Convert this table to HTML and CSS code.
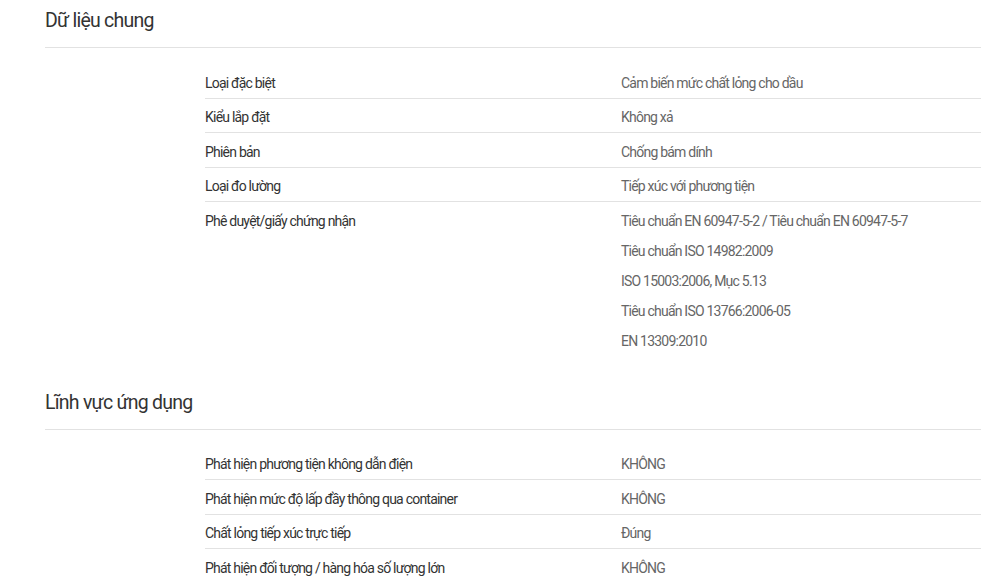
FILE: index.html
```html
<!DOCTYPE html>
<html lang="vi">
<head>
<meta charset="utf-8">
<title>Dữ liệu chung</title>
<link rel="stylesheet" href="styles.css">
</head>
<body>
<main class="page">
  <section class="section">
    <h2 class="section-title">Dữ liệu chung</h2>
    <div class="spec-table">
      <div class="spec-row">
        <div class="spec-label">Loại đặc biệt</div>
        <div class="spec-value"><div class="val-line">Cảm biến mức chất lỏng cho dầu</div></div>
      </div>
      <div class="spec-row">
        <div class="spec-label">Kiểu lắp đặt</div>
        <div class="spec-value"><div class="val-line">Không xả</div></div>
      </div>
      <div class="spec-row">
        <div class="spec-label">Phiên bản</div>
        <div class="spec-value"><div class="val-line">Chống bám dính</div></div>
      </div>
      <div class="spec-row">
        <div class="spec-label">Loại đo lường</div>
        <div class="spec-value"><div class="val-line">Tiếp xúc với phương tiện</div></div>
      </div>
      <div class="spec-row">
        <div class="spec-label">Phê duyệt/giấy chứng nhận</div>
        <div class="spec-value">
          <div class="val-line">Tiêu chuẩn EN 60947-5-2 / Tiêu chuẩn EN 60947-5-7</div>
          <div class="val-line">Tiêu chuẩn ISO 14982:2009</div>
          <div class="val-line">ISO 15003:2006, Mục 5.13</div>
          <div class="val-line">Tiêu chuẩn ISO 13766:2006-05</div>
          <div class="val-line">EN 13309:2010</div>
        </div>
      </div>
    </div>
  </section>
  <section class="section">
    <h2 class="section-title">Lĩnh vực ứng dụng</h2>
    <div class="spec-table">
      <div class="spec-row">
        <div class="spec-label">Phát hiện phương tiện không dẫn điện</div>
        <div class="spec-value"><div class="val-line">KHÔNG</div></div>
      </div>
      <div class="spec-row">
        <div class="spec-label">Phát hiện mức độ lấp đầy thông qua container</div>
        <div class="spec-value"><div class="val-line">KHÔNG</div></div>
      </div>
      <div class="spec-row">
        <div class="spec-label">Chất lỏng tiếp xúc trực tiếp</div>
        <div class="spec-value"><div class="val-line">Đúng</div></div>
      </div>
      <div class="spec-row">
        <div class="spec-label">Phát hiện đối tượng / hàng hóa số lượng lớn</div>
        <div class="spec-value"><div class="val-line">KHÔNG</div></div>
      </div>
    </div>
  </section>
</main>
</body>
</html>
```

FILE: styles.css
```css
html, body {
  margin: 0;
  padding: 0;
  background: #ffffff;
}
body {
  font-family: Roboto, "Liberation Sans", sans-serif;
  overflow: hidden;
}
.page {
  padding-left: 45px;
  padding-top: 5px;
}
.section {
  margin-bottom: 31px;
}
.section-title {
  margin: 0;
  font-size: 19.5px;
  font-weight: 400;
  line-height: 28px;
  letter-spacing: -0.75px;
  color: #333333;
  padding-top: 2px;
  padding-bottom: 12px;
  border-bottom: 1px solid #e2e2e2;
}
.spec-table {
  margin-top: 16px;
  margin-left: 160px;
}
.spec-row {
  display: grid;
  grid-template-columns: 416px 1fr;
  padding: 9.5px 0 6px;
  border-bottom: 1px solid #e2e2e2;
  font-size: 14px;
  line-height: 18px;
  letter-spacing: -0.78px;
}
.spec-row:last-child {
  border-bottom: none;
}
.spec-label {
  color: #333333;
}
.spec-value {
  color: #666666;
}
.val-line + .val-line {
  margin-top: 12px;
}
```
